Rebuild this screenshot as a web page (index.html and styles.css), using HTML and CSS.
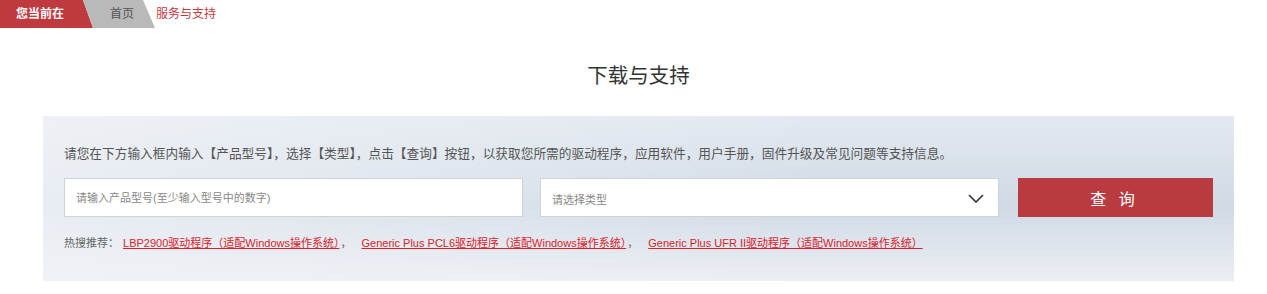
FILE: index.html
```html
<!doctype html>
<html lang="zh-CN">
  <head>
    <meta charset="UTF-8" />
    <title>下载与支持</title>
    <link rel="stylesheet" href="styles.css">
  </head>
  <body>
    <div class="crumbs">
      <span class="crumb-here">您当前在</span>
      <a class="crumb-home" href="#">首页</a>
      <span class="crumb-current">服务与支持</span>
    </div>

    <div class="wrap">
      <h1 class="title">下载与支持</h1>

      <div class="search-panel">
        <p class="tip">请您在下方输入框内输入【产品型号】，选择【类型】，点击【查询】按钮，以获取您所需的驱动程序，应用软件，用户手册，固件升级及常见问题等支持信息。</p>
        <div class="search-row">
          <input type="text" class="model-input" placeholder="请输入产品型号(至少输入型号中的数字)" />
          <div class="type-select">
            <select>
              <option>请选择类型</option>
              <option>驱动程序</option>
              <option>应用软件</option>
              <option>用户手册</option>
            </select>
            <svg class="chevron" width="16" height="9" viewBox="0 0 16 9">
              <polyline points="1,1 8,8 15,1" fill="none" stroke="#333" stroke-width="1.6" />
            </svg>
          </div>
          <button class="search-btn">查 询</button>
        </div>
        <div class="hot">
          <span class="hot-label">热搜推荐：</span>
          <a href="#">LBP2900驱动程序（适配Windows操作系统）</a><span class="sep">，</span>
          <a href="#">Generic Plus PCL6驱动程序（适配Windows操作系统）</a><span class="sep">，</span>
          <a href="#">Generic Plus UFR II驱动程序（适配Windows操作系统）</a>
        </div>
      </div>
    </div>
  </body>
</html>
```

FILE: styles.css
```css
body {
  margin: 0;
  font-family: "Liberation Sans", "Noto Sans CJK SC", sans-serif;
  color: #333;
  background: #fff;
}
.crumbs {
  display: flex;
  height: 28px;
  font-size: 12px;
  line-height: 28px;
}
.crumb-here {
  width: 93px;
  padding-left: 16px;
  box-sizing: border-box;
  background: #bf3a3f;
  color: #fff;
  font-weight: bold;
  clip-path: polygon(0 0, 83px 0, 93px 100%, 0 100%);
}
.crumb-home {
  width: 72px;
  margin-left: -10px;
  padding-left: 27px;
  box-sizing: border-box;
  background: #b9b9b9;
  color: #555;
  text-decoration: none;
  clip-path: polygon(0 0, 60px 0, 72px 100%, 10px 100%);
}
.crumb-current {
  padding-left: 1px;
  color: #bf3a3f;
}
.wrap {
  width: 1191px;
  margin-left: 43px;
}
.title {
  margin: 34px 0 26px;
  font-size: 20.5px;
  font-weight: normal;
  line-height: 28px;
  text-align: center;
  color: #333;
}
.search-panel {
  padding: 28px 21px;
  background:
    linear-gradient(to right, rgba(241, 243, 247, 0.75), rgba(241, 243, 247, 0) 65%),
    linear-gradient(to bottom, #e3e9f0 0%, #cfdae5 55%, #eceef3 100%);
}
.tip {
  margin: 0;
  font-size: 12.7px;
  line-height: 20px;
  color: #555;
}
.search-row {
  display: flex;
  align-items: center;
  margin-top: 14px;
}
.model-input {
  width: 459px;
  height: 39px;
  padding: 0 11px;
  box-sizing: border-box;
  border: 1px solid #cfd3d8;
  background: #fff;
  font-family: inherit;
  font-size: 11px;
  color: #333;
  outline: none;
}
.model-input::placeholder {
  color: #888;
}
.type-select {
  position: relative;
  width: 459px;
  height: 39px;
  margin-left: 17px;
}
.type-select select {
  width: 100%;
  height: 100%;
  padding: 4px 11px 0;
  box-sizing: border-box;
  border: 1px solid #cfd3d8;
  border-radius: 0;
  background: #fff;
  font-family: inherit;
  font-size: 11px;
  color: #888;
  appearance: none;
  -webkit-appearance: none;
  outline: none;
}
.chevron {
  position: absolute;
  right: 15px;
  top: 16px;
  pointer-events: none;
}
.search-btn {
  width: 195px;
  height: 39px;
  margin-left: 19px;
  padding-left: 4px;
  border: none;
  background: #b93b3f;
  color: #fff;
  font-family: inherit;
  font-size: 16px;
  letter-spacing: 4px;
  cursor: pointer;
}
.hot {
  margin-top: 16px;
  font-size: 11px;
  line-height: 20px;
  color: #666;
}
.hot-label {
  margin-right: 1px;
}
.hot a {
  color: #d8232c;
  text-decoration: underline;
}
.sep {
  margin: 0 7px 0 1px;
}
```
